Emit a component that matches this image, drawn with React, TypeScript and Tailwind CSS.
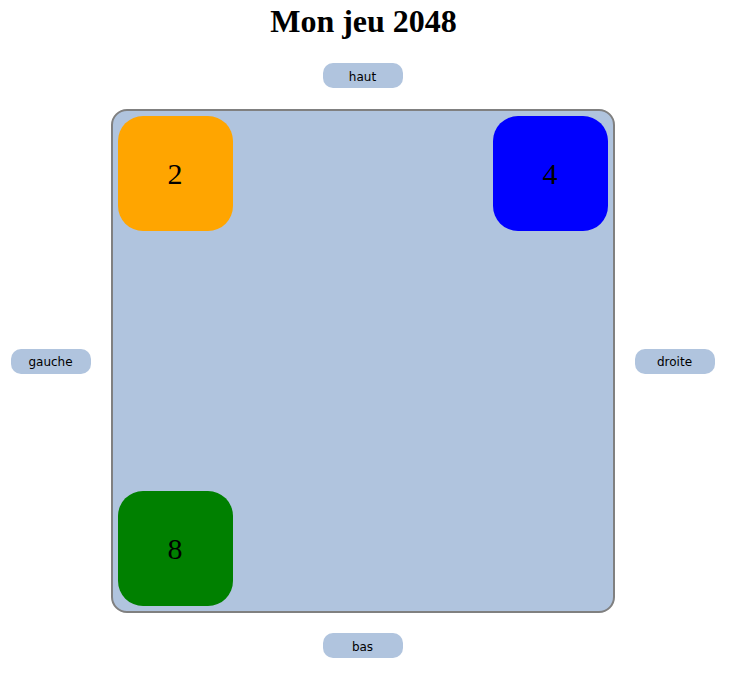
import React from 'react';

type Tile = { row: number; col: number; value: number; color: string };

const tiles: Tile[] = [
  { row: 0, col: 0, value: 2, color: 'bg-[#ffa500]' },
  { row: 0, col: 3, value: 4, color: 'bg-[#0000ff]' },
  { row: 3, col: 0, value: 8, color: 'bg-[#008000]' },
];

const MoveButton = ({ label }: { label: string }) => (
  <button className="w-[80px] h-[25px] pt-[2px] rounded-[10px] bg-[#b0c4de] text-black text-[12px] font-['DejaVu_Sans',sans-serif] leading-none">
    {label}
  </button>
);

export default function App() {
  const cells = Array.from({ length: 16 }, (_, i) => {
    const row = Math.floor(i / 4);
    const col = i % 4;
    const tile = tiles.find((t) => t.row === row && t.col === col);
    return (
      <div key={i} className="w-[125px] h-[125px] p-[5px]">
        {tile && (
          <div
            className={`w-[115px] h-[115px] rounded-[25px] ${tile.color} flex items-center justify-center text-[30px] text-black font-['Liberation_Serif',serif]`}
          >
            {tile.value}
          </div>
        )}
      </div>
    );
  });

  return (
    <div className="w-[725px] min-h-[681px] bg-white flex flex-col items-center">
      <h1 className="mt-[3px] ml-[2px] text-[32px] leading-[37px] font-bold font-['Liberation_Serif',serif] text-black">
        Mon jeu 2048
      </h1>

      <div className="mt-[23px] flex">
        <MoveButton label="haut" />
      </div>

      <div className="mt-[21px] flex items-center gap-[20px]">
        <MoveButton label="gauche" />
        {/* plateau */}
        <div className="w-[504px] h-[504px] border-2 border-[#808080] rounded-[16px] bg-[#b0c4de] grid grid-cols-4">
          {cells}
        </div>
        <MoveButton label="droite" />
      </div>

      <div className="mt-[20px] flex">
        <MoveButton label="bas" />
      </div>
    </div>
  );
}
